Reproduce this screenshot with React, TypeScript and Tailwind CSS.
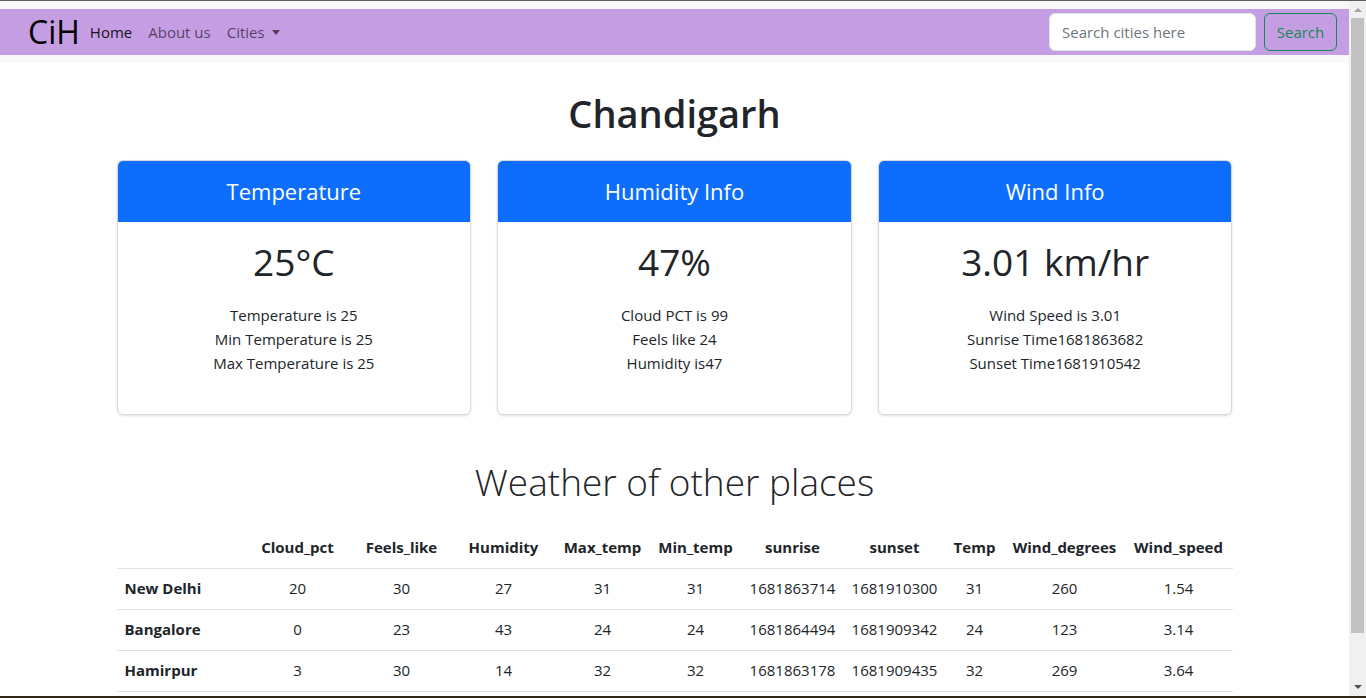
import React from "react";

const cards = [
  {
    title: "Temperature",
    value: "25°C",
    lines: ["Temperature is 25", "Min Temperature is 25", "Max Temperature is 25"],
  },
  {
    title: "Humidity Info",
    value: "47%",
    lines: ["Cloud PCT is 99", "Feels like 24", "Humidity is47"],
  },
  {
    title: "Wind Info",
    value: "3.01 km/hr",
    lines: ["Wind Speed is 3.01", "Sunrise Time1681863682", "Sunset Time1681910542"],
  },
];

const headers = [
  "",
  "Cloud_pct",
  "Feels_like",
  "Humidity",
  "Max_temp",
  "Min_temp",
  "sunrise",
  "sunset",
  "Temp",
  "Wind_degrees",
  "Wind_speed",
];

const rows = [
  ["New Delhi", "20", "30", "27", "31", "31", "1681863714", "1681910300", "31", "260", "1.54"],
  ["Bangalore", "0", "23", "43", "24", "24", "1681864494", "1681909342", "24", "123", "3.14"],
  ["Hamirpur", "3", "30", "14", "32", "32", "1681863178", "1681909435", "32", "269", "3.64"],
];

const widths = [128, 106, 102, 102, 96, 90, 104, 100, 60, 120, 108];

export default function App() {
  return (
    <div className="w-[1366px] h-[698px] flex flex-col overflow-hidden bg-white font-['Open_Sans',sans-serif] text-[#212529]">
      <div className="h-px bg-[#5c5c5c]" />
      <div className="flex flex-1 min-h-0">
        <div className="flex-1 min-w-0 flex flex-col">
          <div className="h-[8px] bg-[#f8f9fa]" />
          <nav className="h-[46px] bg-[#c59de3] flex items-center pl-[28px] pr-[12px]">
            <span className="text-[32px] leading-none text-black mr-[2px]">CiH</span>
            <a className="px-2 text-[15px] text-black/90">Home</a>
            <a className="px-2 text-[15px] text-black/60">About us</a>
            <a className="px-2 text-[15px] text-black/60 flex items-center">
              Cities
              <span className="ml-[7px] w-0 h-0 border-l-[4px] border-r-[4px] border-t-[5px] border-l-transparent border-r-transparent border-t-black/60" />
            </a>
            <div className="ml-auto flex items-center gap-2">
              <div className="w-[207px] h-[38px] bg-white border border-[#dee2e6] rounded-[6px] flex items-center px-3 text-[15px] text-[#6c757d]">
                Search cities here
              </div>
              <div className="h-[38px] w-[73px] justify-center border border-[#198754] rounded-[6px] flex items-center text-[15px] text-[#198754]">
                Search
              </div>
            </div>
          </nav>
          <div className="h-[8px] bg-[#f8f9fa]" />
          <main className="w-[1116px] mx-auto">
            <h1 className="text-center text-[38px] font-semibold leading-[48px] mt-[26px]">Chandigarh</h1>
            <div className="grid grid-cols-3 gap-[26px] mt-[23px]">
              {cards.map((c) => (
                <div
                  key={c.title}
                  className="h-[255px] border border-black/15 rounded-[6px] shadow-sm overflow-hidden flex flex-col"
                >
                  <div className="h-[61px] bg-[#0d6efd] text-white text-[22px] flex items-center justify-center">
                    {c.title}
                  </div>
                  <div className="text-center pt-[16px]">
                    <div className="text-[37px] font-medium leading-[48px]">{c.value}</div>
                    <div className="mt-[17px] text-[15px] leading-[24px]">
                      {c.lines.map((l) => (
                        <div key={l}>{l}</div>
                      ))}
                    </div>
                  </div>
                </div>
              ))}
            </div>
            <h2 className="text-center text-[37px] font-light leading-[48px] mt-[43px]">Weather of other places</h2>
            <table className="table-fixed w-[1116px] mt-[21px] border-collapse text-[15px]">
              <colgroup>
                {widths.map((w, i) => (
                  <col key={i} style={{ width: w }} />
                ))}
              </colgroup>
              <thead>
                <tr className="h-[41px] border-b border-[#dee2e6]">
                  {headers.map((h, i) => (
                    <th key={i} className="font-bold text-center px-0 whitespace-nowrap">
                      {h}
                    </th>
                  ))}
                </tr>
              </thead>
              <tbody>
                {rows.map((r) => (
                  <tr key={r[0]} className="h-[41px] border-b border-[#dee2e6]">
                    {r.map((cell, i) =>
                      i === 0 ? (
                        <th key={i} className="font-bold text-left pl-2">
                          {cell}
                        </th>
                      ) : (
                        <td key={i} className="text-center whitespace-nowrap">
                          {cell}
                        </td>
                      )
                    )}
                  </tr>
                ))}
              </tbody>
            </table>
          </main>
        </div>
        <div className="w-[17px] bg-[#f0f0f0] flex flex-col items-center">
          <div className="h-[17px] flex items-center justify-center">
            <span className="w-0 h-0 border-l-[4px] border-r-[4px] border-b-[4px] border-l-transparent border-r-transparent border-b-[#a3a3a3]" />
          </div>
          <div className="w-[13px] h-[615px] bg-[#c1c1c1]" />
          <div className="flex-1" />
          <div className="h-[17px] flex items-start justify-center pt-[6px]">
            <span className="w-0 h-0 border-l-[4px] border-r-[4px] border-t-[4px] border-l-transparent border-r-transparent border-t-[#505050]" />
          </div>
        </div>
      </div>
      <div className="h-[2px] bg-[#2e2616]" />
    </div>
  );
}
